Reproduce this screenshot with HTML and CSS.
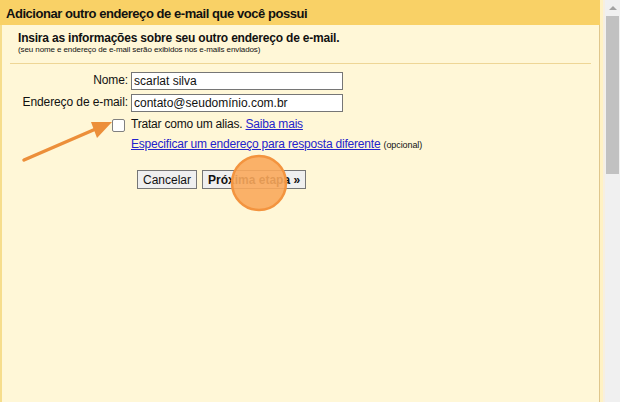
FILE: index.html
```html
<!DOCTYPE html>
<html lang="pt-BR">
<head>
    <meta charset="UTF-8">
    <meta name="viewport" content="width=device-width, initial-scale=1.0">
    <title>Adicionar outro endereço de e-mail</title>
    <link rel="stylesheet" href="styles.css">
</head>
<body>
    <div class="window">
        <div class="dialog">
            <div class="header">Adicionar outro endereço de e-mail que você possui</div>
            <div class="content">
                <div class="intro">
                    <div class="intro-title">Insira as informações sobre seu outro endereço de e-mail.</div>
                    <div class="intro-note">(seu nome e endereço de e-mail serão exibidos nos e-mails enviados)</div>
                </div>
                <div class="form">
                    <label class="label" for="name">Nome:</label>
                    <input class="field" type="text" id="name" value="scarlat silva">

                    <label class="label" for="email">Endereço de e-mail:</label>
                    <input class="field" type="text" id="email" value="contato@seudomínio.com.br">

                    <div class="label"><span class="check"></span></div>
                    <div class="option">Tratar como um alias. <a href="#">Saiba mais</a></div>

                    <div class="label"></div>
                    <div class="option"><a href="#">Especificar um endereço para resposta diferente</a> <span class="small">(opcional)</span></div>

                    <div class="label"></div>
                    <div class="buttons">
                        <button class="btn">Cancelar</button>
                        <button class="btn btn-next">Próxima etapa »</button>
                    </div>
                </div>
            </div>
        </div>
        <div class="scrollbar">
            <div class="scroll-arrow"></div>
            <div class="scroll-thumb"></div>
        </div>

        <svg class="annotation" width="620" height="402" viewBox="0 0 620 402">
            <line x1="24" y1="160" x2="98" y2="128" stroke="#ec8f3a" stroke-width="3.5" stroke-linecap="round"/>
            <polygon points="112,122 91,122 97,138" fill="#ec8f3a"/>
            <circle cx="259" cy="183" r="27" fill="rgba(250,168,92,0.9)" stroke="#f3943f" stroke-width="2.5"/>
        </svg>
    </div>
</body>
</html>
```

FILE: styles.css
```css
* {
    margin: 0;
    padding: 0;
    box-sizing: border-box;
}
body {
    font-family: "Liberation Sans", Arial, sans-serif;
    color: #000;
    background: #fff7d7;
}
.window {
    position: relative;
    display: flex;
    width: 620px;
    height: 402px;
    overflow: hidden;
}
.dialog {
    flex: 1;
    display: flex;
    flex-direction: column;
    background: #fff7d7;
    border-left: 2px solid #f6dd8c;
    border-right: 3px solid #fff2c4;
}
.header {
    height: 25px;
    margin-left: -2px;
    padding-left: 6px;
    line-height: 27px;
    background: #f9d166;
    font-size: 13px;
    letter-spacing: -0.45px;
    font-weight: bold;
    color: #111;
    white-space: nowrap;
}
.content {
    flex: 1;
    padding: 6px 8px 0 8px;
    border-right: 1px solid #dfc68c;
}
.intro {
    padding: 0 0 8px 8px;
    border-bottom: 1px solid #eed696;
}
.intro-title {
    font-size: 12px;
    font-weight: bold;
    letter-spacing: -0.2px;
    line-height: 14px;
    color: #111;
}
.intro-note {
    font-size: 8px;
    letter-spacing: -0.1px;
    line-height: 10px;
    color: #111;
}
.form {
    display: grid;
    grid-template-columns: 118px auto;
    column-gap: 3px;
    row-gap: 4px;
    margin-top: 8px;
    align-items: start;
}
.label {
    font-size: 12px;
    line-height: 17px;
    letter-spacing: -0.1px;
    text-align: right;
    color: #111;
}
.field {
    display: block;
    width: 212px;
    height: 18px;
    padding: 0 2px;
    border: 1px solid #767676;
    background: #fff;
    font-family: "Liberation Sans", Arial, sans-serif;
    font-size: 12px;
    color: #111;
}
.check {
    display: block;
    width: 13px;
    height: 13px;
    margin: 3px 3px 0 auto;
    border: 1px solid #808080;
    border-radius: 2px;
    background: #fff;
}
.option {
    font-size: 12px;
    line-height: 16px;
    letter-spacing: -0.2px;
    color: #111;
}
.option a {
    color: #2424cc;
}
.small {
    font-size: 9px;
    letter-spacing: -0.1px;
}
.buttons {
    display: flex;
    gap: 5px;
    margin: 13px 0 0 6px;
}
.btn {
    height: 19px;
    padding: 0 5px;
    border: 1px solid #767676;
    border-radius: 0;
    background: #efefef;
    font-family: "Liberation Sans", Arial, sans-serif;
    font-size: 12px;
    color: #111;
}
.btn-next {
    font-weight: bold;
}
.scrollbar {
    width: 17px;
    background: #f0f0f0;
    border-left: 2px solid #f7efe0;
    display: flex;
    flex-direction: column;
    align-items: center;
}
.scroll-arrow {
    width: 0;
    height: 0;
    margin: 6px 0 4px;
    border-left: 4px solid transparent;
    border-right: 4px solid transparent;
    border-bottom: 4px solid #a3a3a3;
}
.scroll-thumb {
    width: 13px;
    height: 158px;
    margin-top: 2px;
    background: #c1c1c1;
}
.annotation {
    position: absolute;
    left: 0;
    top: 0;
    pointer-events: none;
}
```
